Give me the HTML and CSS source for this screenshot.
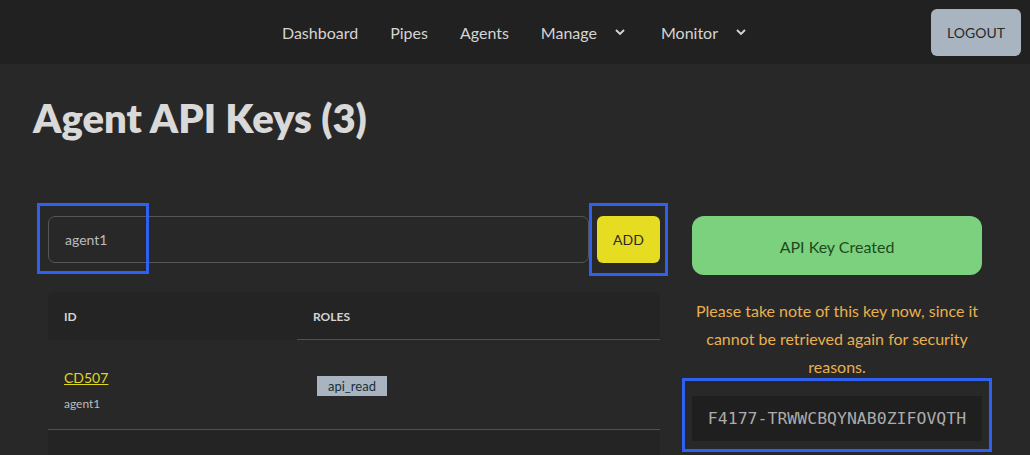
FILE: index.html
```html
<!DOCTYPE html>
<html>
<head>
<meta charset="utf-8">
<link rel="stylesheet" href="styles.css">
</head>
<body>
<nav class="topbar">
  <div class="nav-links">
    <a class="nav-link">Dashboard</a>
    <a class="nav-link">Pipes</a>
    <a class="nav-link">Agents</a>
    <a class="nav-link nav-drop">Manage <svg class="chev" viewBox="0 0 12 8" width="12" height="8"><path d="M2 2 L6 6 L10 2" fill="none" stroke="#d4d4d4" stroke-width="1.9"/></svg></a>
    <a class="nav-link nav-drop">Monitor <svg class="chev" viewBox="0 0 12 8" width="12" height="8"><path d="M2 2 L6 6 L10 2" fill="none" stroke="#d4d4d4" stroke-width="1.9"/></svg></a>
  </div>
  <button class="logout">LOGOUT</button>
</nav>
<main class="page">
  <h1 class="title">Agent API Keys (3)</h1>
  <div class="grid">
    <section class="left">
      <div class="form-row">
        <div class="input">agent1</div>
        <button class="add">ADD</button>
        <span class="mark mark-input"></span>
        <span class="mark mark-add"></span>
      </div>
      <div class="table">
        <div class="thead">
          <div class="th th-id">ID</div>
          <div class="th th-roles">ROLES</div>
        </div>
        <div class="row">
          <div class="cell cell-id">
            <a class="id-link">CD507</a>
            <div class="sub">agent1</div>
          </div>
          <div class="cell cell-roles"><span class="tag">api_read</span></div>
        </div>
        <div class="row row-alt"></div>
      </div>
    </section>
    <aside class="right">
      <div class="created">API Key Created</div>
      <p class="note">Please take note of this key now, since it cannot be retrieved again for security reasons.</p>
      <div class="key-wrap">
        <div class="key">F4177-TRWWCBQYNAB0ZIFOVQTH</div>
        <span class="mark mark-key"></span>
      </div>
    </aside>
  </div>
</main>
</body>
</html>
```
FILE: styles.css
```css
* { box-sizing: border-box; }
html, body { margin: 0; padding: 0; }
body {
  background: #282828;
  font-family: "Lato", "Noto Sans", sans-serif;
  color: #d4d4d4;
  height: 455px;
  overflow: hidden;
}
.topbar {
  height: 64px;
  background: #212121;
  display: flex;
  align-items: center;
  justify-content: flex-end;
  padding-right: 9px;
}
.nav-links {
  display: flex;
  gap: 32px;
  margin-right: 181px;
}
.nav-drop { gap: 17px; padding-right: 3px; }
.nav-link {
  font-size: 16px;
  color: #d4d4d4;
  display: flex;
  align-items: center;
}
.chev { display: block; margin-top: 0; }
.logout {
  width: 90px;
  height: 47px;
  background: #a8b5c0;
  border: none;
  border-radius: 6px;
  font-family: inherit;
  font-size: 14px;
  color: #2a2a2a;
}
.page { padding: 0 33px; }
.title {
  margin: 0;
  padding-top: 31px;
  font-size: 40px;
  font-weight: 800;
  line-height: 46px;
  color: #d9d9d9;
}
.grid {
  display: grid;
  grid-template-columns: 612px 290px;
  column-gap: 32px;
  padding-left: 15px;
  margin-top: 75px;
}
.form-row {
  position: relative;
  display: flex;
  gap: 8px;
  height: 47px;
}
.input {
  flex: 1;
  border: 1px solid #555;
  border-radius: 7px;
  padding: 0 16px;
  font-size: 14px;
  color: #bdbdbd;
  display: flex;
  align-items: center;
}
.add {
  width: 63px;
  background: #e6dd22;
  border: none;
  border-radius: 6px;
  font-family: inherit;
  font-size: 14px;
  color: #2a2a2a;
}
.mark {
  position: absolute;
  border: 3px solid #2f60f0;
  pointer-events: none;
}
.mark-input { left: -11px; top: -13px; width: 112px; height: 71px; }
.mark-add { left: 541px; top: -13px; width: 79px; height: 73px; }
.table { margin-top: 29px; }
.thead {
  display: flex;
  height: 48px;
  border-radius: 6px 6px 0 0;
  background: #242424;
}
.th {
  font-size: 12px;
  font-weight: 700;
  color: #d4d4d4;
  padding: 17px 16px 0;
}
.th-id { width: 249px; }
.th-roles { flex: 1; border-bottom: 1px solid #505050; }
.row {
  display: flex;
  height: 90px;
  border-bottom: 1px solid #505050;
}
.row-alt { background: #242424; border-bottom: none; height: 40px; }
.cell-id { width: 249px; padding: 29px 16px 0; }
.id-link {
  font-size: 14px;
  color: #e0d622;
  text-decoration: underline;
  display: block;
  line-height: 18px;
}
.sub { font-size: 12px; color: #bdbdbd; margin-top: 9px; }
.cell-roles { padding: 35px 20px 0; }
.tag {
  display: inline-block;
  background: #a8b5c0;
  color: #1f2d38;
  font-size: 13px;
  line-height: 20px;
  padding: 0 11px;
}
.right { display: flex; flex-direction: column; }
.created {
  height: 59px;
  background: #7bd17e;
  border-radius: 12px;
  display: flex;
  align-items: center;
  justify-content: center;
  font-size: 16px;
  color: #1d4a20;
  padding-top: 2px;
}
.note {
  margin: 22px 0 0;
  text-align: center;
  font-size: 16px;
  line-height: 28px;
  color: #e8b04f;
  padding: 0 4px;
}
.key-wrap { position: relative; margin-top: 15px; }
.key {
  height: 45px;
  background: #1f1f1f;
  display: flex;
  align-items: center;
  justify-content: center;
  font-family: "DejaVu Sans Mono", "Liberation Mono", monospace;
  font-size: 16.5px;
  color: #ababab;
}
.mark-key { left: -10px; top: -18px; width: 310px; height: 74px; }
```
